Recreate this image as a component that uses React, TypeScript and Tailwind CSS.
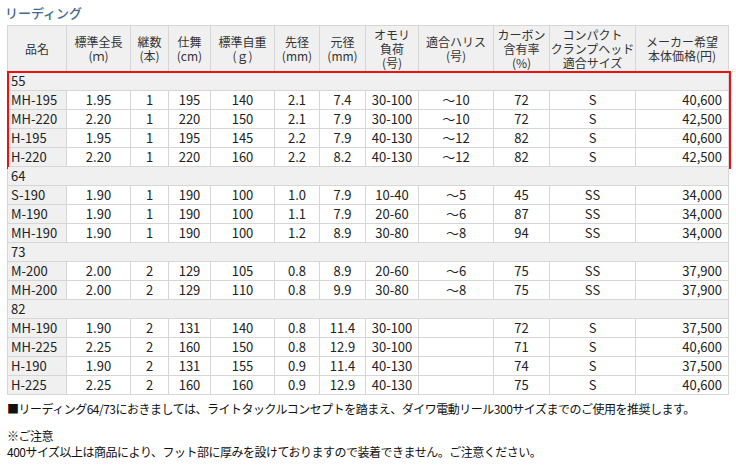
const COLS = 'grid grid-cols-[59px_64px_38px_42px_64px_45px_46px_53px_75px_56px_86px_93px]';

const HEAD: string[] = [
  '品名',
  '標準全長\n(ｍ)',
  '継数\n(本)',
  '仕舞\n(cm)',
  '標準自重\n(ｇ)',
  '先径\n(mm)',
  '元径\n(mm)',
  'オモリ\n負荷\n(号)',
  '適合ハリス\n(号)',
  'カーボン\n含有率\n(%)',
  'コンパクト\nクランプヘッド\n適合サイズ',
  'メーカー希望\n本体価格(円)',
];

type Group = { name: string; rows: string[][]; highlight?: boolean };

const GROUPS: Group[] = [
  {
    name: '55',
    highlight: true,
    rows: [
      ['MH-195', '1.95', '1', '195', '140', '2.1', '7.4', '30-100', '～10', '72', 'S', '40,600'],
      ['MH-220', '2.20', '1', '220', '150', '2.1', '7.9', '30-100', '～10', '72', 'S', '42,500'],
      ['H-195', '1.95', '1', '195', '145', '2.2', '7.9', '40-130', '～12', '82', 'S', '40,600'],
      ['H-220', '2.20', '1', '220', '160', '2.2', '8.2', '40-130', '～12', '82', 'S', '42,500'],
    ],
  },
  {
    name: '64',
    rows: [
      ['S-190', '1.90', '1', '190', '100', '1.0', '7.9', '10-40', '～5', '45', 'SS', '34,000'],
      ['M-190', '1.90', '1', '190', '100', '1.1', '7.9', '20-60', '～6', '87', 'SS', '34,000'],
      ['MH-190', '1.90', '1', '190', '100', '1.2', '8.9', '30-80', '～8', '94', 'SS', '34,000'],
    ],
  },
  {
    name: '73',
    rows: [
      ['M-200', '2.00', '2', '129', '105', '0.8', '8.9', '20-60', '～6', '75', 'SS', '37,900'],
      ['MH-200', '2.00', '2', '129', '110', '0.8', '9.9', '30-80', '～8', '75', 'SS', '37,900'],
    ],
  },
  {
    name: '82',
    rows: [
      ['MH-190', '1.90', '2', '131', '140', '0.8', '11.4', '30-100', '', '72', 'S', '37,500'],
      ['MH-225', '2.25', '2', '160', '150', '0.8', '12.9', '30-100', '', '71', 'S', '40,600'],
      ['H-190', '1.90', '2', '131', '155', '0.9', '11.4', '40-130', '', '74', 'S', '37,500'],
      ['H-225', '2.25', '2', '160', '160', '0.9', '12.9', '40-130', '', '75', 'S', '40,600'],
    ],
  },
];

function DataRow({ cells }: { cells: string[] }) {
  return (
    <div className={COLS}>
      {cells.map((c, i) => (
        <div
          key={i}
          className={
            'flex h-[19px] items-center border-r border-b border-[#d6d6d6] ' +
            (i === 0
              ? 'bg-[#f0f0f0] pl-[3px]'
              : i === 11
                ? 'justify-end bg-white pr-[6px]'
                : 'justify-center bg-white')
          }
        >
          {c}
        </div>
      ))}
    </div>
  );
}

export default function App() {
  return (
    <div className="h-[467px] w-[736px] bg-white font-['Noto_Sans_CJK_JP',sans-serif] text-[#222]">
      <div className="px-[5px] pt-[4px] text-[13px] leading-[18px] font-medium text-[#46688f]">リーディング</div>

      <div className="ml-[7px] mt-[3px] w-[722px] border-t border-l border-[#d6d6d6] text-[13px] leading-[14px]">
        <div className={COLS}>
          {HEAD.map((label, i) => (
            <div
              key={i}
              className="flex h-[46px] items-center justify-center border-r border-b border-[#d6d6d6] bg-[#f0f0f0] text-center text-[12px] leading-[14px] whitespace-pre-line text-[#333]"
            >
              {label}
            </div>
          ))}
        </div>

        {GROUPS.map(g => (
          <div key={g.name} className="relative">
            <div className="flex h-[19px] items-center border-r border-b border-[#d6d6d6] bg-[#f0f0f0] pl-[3px]">
              {g.name}
            </div>
            {g.rows.map((r, i) => (
              <DataRow key={i} cells={r} />
            ))}
            {g.highlight && (
              <div className="pointer-events-none absolute -top-px -right-[2px] -bottom-[2px] -left-px border-2 border-[#f01010]" />
            )}
          </div>
        ))}
      </div>

      <div className="mt-[6px] pl-[7px] text-[12px] leading-[16px] tracking-[-0.5px] text-[#111]">
        <p>■リーディング64/73におきましては、ライトタックルコンセプトを踏まえ、ダイワ電動リール300サイズまでのご使用を推奨します。</p>
        <p className="mt-[11px]">※ご注意</p>
        <p>400サイズ以上は商品により、フット部に厚みを設けておりますので装着できません。ご注意ください。</p>
      </div>
    </div>
  );
}
